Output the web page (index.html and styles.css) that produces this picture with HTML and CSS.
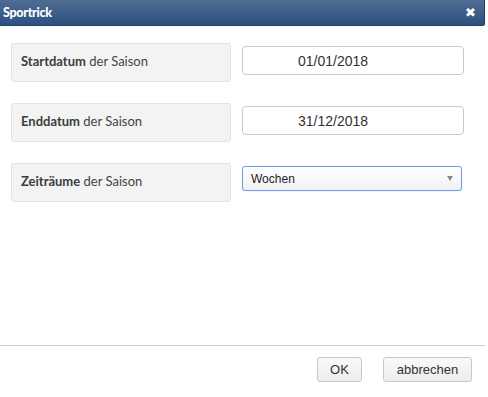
FILE: index.html
```html
<!DOCTYPE html>
<html>
<head>
<meta charset="utf-8">
<link rel="stylesheet" href="styles.css">
</head>
<body>
<div class="dialog">
  <div class="titlebar">
    <span class="title">Sportrick</span>
    <span class="close">&#x2716;</span>
  </div>
  <div class="content">
    <div class="row">
      <div class="label"><b>Startdatum</b> der Saison</div>
      <div class="field"><input class="date" type="text" value="01/01/2018"></div>
    </div>
    <div class="row">
      <div class="label"><b>Enddatum</b> der Saison</div>
      <div class="field"><input class="date" type="text" value="31/12/2018"></div>
    </div>
    <div class="row">
      <div class="label"><b>Zeiträume</b> der Saison</div>
      <div class="field">
        <div class="select"><span>Wochen</span><span class="arrow"></span></div>
      </div>
    </div>
  </div>
  <div class="footer">
    <button class="btn ok">OK</button>
    <button class="btn cancel">abbrechen</button>
  </div>
</div>
</body>
</html>
```
FILE: styles.css
```css
html, body { margin: 0; padding: 0; background: #fff; }
.dialog {
  width: 485px;
  height: 397px;
  display: flex;
  flex-direction: column;
  font-family: "Lato", sans-serif;
}
.titlebar {
  height: 26px;
  flex: none;
  box-sizing: border-box;
  background: linear-gradient(#4f6d93, #2c5080);
  border-right: 1px solid #1f3a5c;
  border-bottom: 1px solid #24405f;
  border-bottom-right-radius: 2px;
  display: flex;
  align-items: center;
  justify-content: space-between;
  padding: 0 8px 1px 3px;
}
.title {
  color: #fff;
  font-weight: 900;
  font-size: 12.5px;
  letter-spacing: -0.3px;
}
.close {
  color: #fff;
  font-size: 13px;
  font-family: "DejaVu Sans", sans-serif;
}
.content {
  flex: 1;
  padding: 17px 0 0 11px;
  display: flex;
  flex-direction: column;
  gap: 21px;
}
.row {
  display: flex;
  align-items: flex-start;
}
.label {
  width: 220px;
  height: 39px;
  box-sizing: border-box;
  background: #f3f3f3;
  border: 1px solid #e2e2e2;
  border-radius: 3px;
  padding: 0 0 3px 9px;
  display: flex;
  align-items: center;
  font-size: 13px;
  color: #444;
  white-space: pre;
}
.label b { font-weight: 700; color: #3c3c3c; }
.field {
  padding: 3px 0 0 11px;
}
.date {
  width: 222px;
  height: 29px;
  box-sizing: border-box;
  border: 1px solid #c9c9c9;
  border-radius: 4px;
  font-family: "Liberation Sans", Arial, sans-serif;
  font-size: 14px;
  color: #333;
  padding: 0 0 0 55px;
  margin: 0;
  outline: none;
  background: #fff;
}
.select {
  width: 220px;
  height: 25px;
  box-sizing: border-box;
  border: 1px solid #6b9ef0;
  border-radius: 3px;
  box-shadow: 0 0 1px #9bbcf5;
  background: linear-gradient(#ffffff, #f1f1f1);
  display: flex;
  align-items: center;
  justify-content: space-between;
  padding: 0 8px 0 8px;
  font-family: "Liberation Sans", Arial, sans-serif;
  font-size: 12px;
  color: #222;
}
.arrow {
  width: 0; height: 0;
  border-left: 3.5px solid transparent;
  border-right: 3.5px solid transparent;
  border-top: 5px solid #888;
}
.footer {
  height: 52px;
  flex: none;
  box-sizing: border-box;
  border-top: 1px solid #cfcfcf;
  display: flex;
  justify-content: flex-end;
  align-items: flex-start;
  padding: 11px 13px 0 0;
  gap: 21px;
}
.btn {
  height: 25px;
  box-sizing: border-box;
  border: 1px solid #c8c8c8;
  border-radius: 3px;
  background: linear-gradient(#fafafa, #ececec);
  font-family: "Liberation Sans", Arial, sans-serif;
  font-size: 13px;
  color: #333;
  padding: 0;
  margin: 0;
}
.btn.ok { width: 45px; }
.btn.cancel { width: 89px; }
```
